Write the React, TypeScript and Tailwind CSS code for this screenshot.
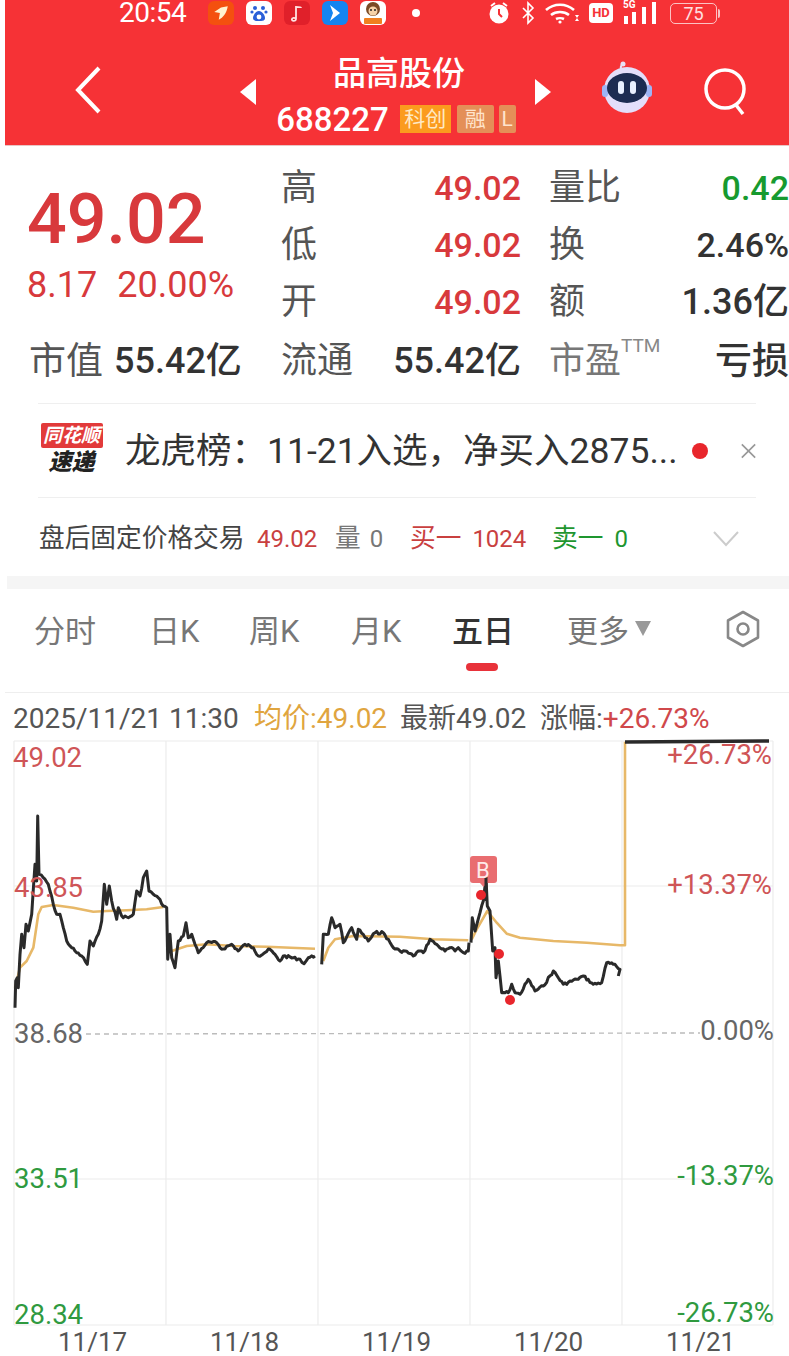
import React from "react";

const FONT = "font-['Roboto','Noto_Sans_CJK_SC',sans-serif]";

const z3 = (pts: number[][]) => pts.map(([x, y]) => [x / 3, 780 + y / 3]);
const z4 = (pts: number[][]) => pts.map(([x, y]) => [400 + x / 3, 720 + y / 3]);

function jag(pts: number[][], amp = 1.4) {
  const out: string[] = [];
  let seed = 7;
  const rnd = () => {
    seed = (seed * 9301 + 49297) % 233280;
    return seed / 233280 - 0.5;
  };
  pts.forEach(([x, y], i) => {
    if (i === 0) {
      out.push(`${x.toFixed(1)},${y.toFixed(1)}`);
      return;
    }
    const [px, py] = pts[i - 1];
    const n = Math.max(1, Math.floor(Math.abs(x - px) / 1.6));
    for (let k = 1; k <= n; k++) {
      const t = k / n;
      const j = k === n ? 0 : rnd() * amp * 2;
      out.push(`${(px + (x - px) * t).toFixed(1)},${(py + (y - py) * t + j).toFixed(1)}`);
    }
  });
  return out.join(" ");
}
const smooth = (pts: number[][]) => pts.map(([x, y]) => `${x.toFixed(1)},${y.toFixed(1)}`).join(" ");

const black1 = jag(z3([[45,680],[47,600],[52,590],[55,620],[60,520],[65,460],[72,500],[78,430],[85,450],[95,400],[105,250],[110,300],[113,105],[117,280],[130,290],[145,310],[160,370],[170,400],[180,400],[190,440],[200,480],[215,500],[230,515],[245,525],[262,550],[270,480],[280,495],[295,460],[305,420],[313,310],[320,370],[328,315],[335,360],[350,415],[355,380],[365,405],[385,410],[400,400],[410,330],[420,345],[430,290],[440,270],[447,330],[460,340],[475,350],[490,375],[500,380],[503,535],[510,460],[515,530],[525,560],[535,480],[550,465],[558,425],[565,470],[575,460],[585,490],[595,515],[620,485],[650,485],[665,505],[695,490],[715,510],[735,490],[760,500],[775,525],[810,505],[840,540],[850,525],[900,535],[912,548],[925,530],[945,525]]));
const black2 = jag([...z3([[965,550],[970,460],[985,460],[995,410],[1005,440],[1020,430],[1030,485],[1055,440],[1070,475],[1075,445],[1105,480],[1125,455],[1150,455],[1180,500],[1200,510]]), ...z4([[15,690],[40,705],[55,690],[70,695],[90,655],[115,675],[135,690],[150,680],[165,690],[175,680],[190,695],[205,690],[207,665]])]);
const black3 = jag(z4([[213,665],[217,590],[225,630],[240,575],[250,540],[258,470],[262,555],[270,570],[278,690],[285,680],[288,770],[295,720],[305,815],[325,815],[335,790],[345,815],[360,820],[385,775],[405,810],[430,795],[460,750],[490,790],[530,775],[550,765],[580,790],[605,785],[620,725],[640,730],[660,745],[655,765]]));
const avg1 = smooth(z3([[45,620],[60,560],[80,540],[100,500],[115,400],[125,378],[160,372],[220,380],[280,392],[320,390],[380,388],[440,385],[490,378]]));
const avg2 = smooth(z3([[515,510],[560,495],[620,490],[700,495],[800,497],[945,503]]));
const avg3 = smooth([...z3([[970,540],[985,500],[1005,475],[1060,465],[1200,467]]), ...z4([[100,655],[205,658]])]);
const avg4 = smooth(z4([[215,655],[230,625],[262,570],[290,605],[320,638],[360,650],[460,660],[560,665],[660,673],[675,673],[675,62]]));

function AppIcon({ className, children }: { className: string; children?: React.ReactNode }) {
  return <div className={`w-[26px] h-[24px] rounded-[6px] flex items-center justify-center overflow-hidden shrink-0 ${className}`}>{children}</div>;
}

function StatusBar() {
  return (
    <div className="h-[26px] flex items-center text-white">
      <span className="ml-[114px] w-[89px] shrink-0 text-[28px] leading-[26px] tracking-[-0.5px]">20:54</span>
      <div className="flex gap-[12px] items-center">
        <AppIcon className="bg-[#f4500f]">
          <svg width="18" height="18" viewBox="0 0 16 16"><path d="M14 2 L8 3 L2 7 L7 8 L6 14 C10 12 13 8 14 2Z" fill="#fff3d0" /></svg>
        </AppIcon>
        <AppIcon className="bg-white">
          <svg width="20" height="20" viewBox="0 0 20 20" fill="#2a5fd8"><circle cx="6" cy="5" r="2" /><circle cx="14" cy="5" r="2" /><circle cx="3" cy="9" r="1.6" /><circle cx="17" cy="9" r="1.6" /><path d="M10 8c3 0 6 4 6 7 0 3-3 3-6 3s-6 0-6-3c0-3 3-7 6-7z" /><circle cx="10" cy="14" r="2.4" fill="#fff" /></svg>
        </AppIcon>
        <AppIcon className="bg-[#e0202a]">
          <svg width="14" height="18" viewBox="0 0 14 18"><path d="M6 15V3c2 0 5 0 5 1M6 15c0 3-5 2-4 0 0-1 3-2 4 0" fill="none" stroke="#ffe2e2" strokeWidth="1.8" /></svg>
        </AppIcon>
        <AppIcon className="bg-[#1584f0]">
          <svg width="16" height="18" viewBox="0 0 16 18"><path d="M3 1 L13 9 L3 17 L6 9Z" fill="#fff" /></svg>
        </AppIcon>
        <AppIcon className="bg-white">
          <svg width="24" height="24" viewBox="0 0 24 24"><circle cx="12" cy="8" r="7" fill="#7a4a25" /><circle cx="12" cy="10" r="4.500" fill="#f6d3a8" /><circle cx="10" cy="9" r="1" fill="#222" /><circle cx="14" cy="9" r="1" fill="#222" /><rect x="3" y="17" width="18" height="6" rx="1" fill="#f08020" /></svg>
        </AppIcon>
      </div>
      <div className="ml-[26px] w-[8px] h-[8px] rounded-full bg-white shrink-0" />
      <div className="ml-[66px] flex items-center shrink-0">
        <svg width="26" height="24" viewBox="0 0 26 24" fill="none"><circle cx="13" cy="13" r="9.500" fill="#fff" /><path d="M13 8v5l3 3" stroke="#f63236" strokeWidth="2" /><path d="M5 5l4-3M21 5l-4-3" stroke="#fff" strokeWidth="2" /></svg>
        <svg className="ml-[8px]" width="16" height="24" viewBox="0 0 16 24" fill="none" stroke="#fff" strokeWidth="1.600"><path d="M3 7l10 10-5 5V2l5 5L3 17" /></svg>
        <svg className="ml-[8px]" width="36" height="24" viewBox="0 0 36 24" fill="none" stroke="#fff" strokeWidth="2.600"><path d="M2 9c8-7 20-7 28 0M7 14c5-4 13-4 18 0M12 18c2-1 6-1 8 0" /><circle cx="16" cy="21" r="1.600" fill="#fff" stroke="none" /><path d="M31 14l2 3 2-3zM31 20l2-3 2 3z" fill="#fff" stroke="none" /></svg>
        <div className="ml-[9px] w-[24px] h-[20px] rounded-[4px] bg-white text-[#f63236] text-[13px] leading-[20px] font-bold text-center">HD</div>
        <div className="relative ml-[10px] w-[36px] h-[24px]">
          <span className="absolute left-0 -top-[1px] text-[10px] leading-none font-bold">5G</span>
          <svg width="36" height="24" viewBox="0 0 36 24" fill="#fff"><rect x="1" y="15" width="4" height="8" /><rect x="9" y="11" width="4" height="12" /><rect x="19" y="6" width="4" height="17" /><rect x="29" y="1" width="4" height="22" /></svg>
        </div>
        <div className="ml-[11px] w-[47px] h-[21px] rounded-[5px] border border-white/70 text-white/85 text-[18px] leading-[19px] text-center">75</div>
        <div className="ml-[1px] w-[2px] h-[9px] bg-white/70 rounded-r-[2px]" />
      </div>
    </div>
  );
}

function Header() {
  return (
    <div className="h-[146px] bg-[#f63236] text-white border-b border-[#e9c5c5]">
      <StatusBar />
      <div className="flex items-start h-[119px] pt-[28px]">
        <svg className="ml-[68px] mt-[11px]" width="30" height="50" viewBox="0 0 30 50" fill="none" stroke="#fff" strokeWidth="4"><path d="M26 3L5 25l21 22" /></svg>
        <svg className="ml-[136px] mt-[24px]" width="18" height="28" viewBox="0 0 18 28"><path d="M17 1v26L1 14z" fill="#fff" /></svg>
        <div className="w-[284px] flex flex-col items-center shrink-0">
          <span className="text-[33px] leading-[40px] font-medium">品高股份</span>
          <div className="flex items-center h-[42px] mt-[4px] -ml-[6px]">
            <span className="text-[33px] leading-none mr-[11px] font-medium">688227</span>
            <span className="bg-[#fb9b1e] text-[#ffe9c4] text-[21px] leading-[28px] h-[28px] w-[51px] text-center">科创</span>
            <span className="ml-[6px] bg-[#e48f58] text-[#ffe4cc] text-[21px] leading-[28px] h-[28px] w-[37px] text-center rounded-[2px]">融</span>
            <span className="ml-[5px] bg-[#e48f58] text-[#ffe4cc] text-[21px] leading-[28px] h-[28px] w-[17px] text-center rounded-[2px]">L</span>
          </div>
        </div>
        <svg className="-ml-[7px] mt-[24px]" width="18" height="28" viewBox="0 0 18 28"><path d="M1 1v26l16-13z" fill="#fff" /></svg>
        <svg className="ml-[48px] mt-[7px]" width="54" height="52" viewBox="0 0 54 52">
          <path d="M22 10c-2-3-1-6 1-8" fill="none" stroke="#e8dff5" strokeWidth="2" />
          <circle cx="23" cy="3" r="2.500" fill="#e8dff5" />
          <circle cx="27" cy="29" r="23" fill="#e3defa" />
          <rect x="2" y="24" width="6" height="12" rx="3" fill="#9db4f5" />
          <rect x="46" y="24" width="6" height="12" rx="3" fill="#9db4f5" />
          <ellipse cx="27" cy="27" rx="20" ry="15" fill="#1c2c52" />
          <rect x="18" y="20" width="6" height="13" rx="3" fill="#e8f0ff" />
          <rect x="30" y="20" width="6" height="13" rx="3" fill="#e8f0ff" />
        </svg>
        <svg className="ml-[49px] mt-[14px]" width="46" height="48" viewBox="0 0 46 48" fill="none" stroke="#fff" strokeWidth="3.500"><circle cx="22" cy="21" r="19" /><path d="M33 37l7 9" /></svg>
      </div>
    </div>
  );
}

function Stat({ label, value, color, big }: { label: string; value: string; color: string; big?: boolean }) {
  return (
    <div className="flex items-center justify-between whitespace-nowrap">
      <span className="text-[36px] text-[#555]">{label}</span>
      <span className={`${big ? "text-[36px]" : "text-[34px]"} font-medium ${color}`}>{value}</span>
    </div>
  );
}

function Stats() {
  return (
    <div className="grid grid-cols-[248px_240px_240px] gap-x-[28px] grid-rows-[57px_57px_57px_59px] h-[257px] pt-[13px] leading-none overflow-hidden">
      <div className="row-span-3 pl-[22px] pt-[25px]">
        <div className="text-[70px] leading-[70px] font-medium text-[#d8393c]">49.02</div>
        <div className="flex gap-[20px] text-[36px] leading-[62px] text-[#d8393c] whitespace-nowrap"><span>8.17</span><span>20.00%</span></div>
      </div>
      <Stat label="高" value="49.02" color="text-[#d8393c]" />
      <Stat label="量比" value="0.42" color="text-[#179a2f]" />
      <Stat label="低" value="49.02" color="text-[#d8393c]" />
      <Stat label="换" value="2.46%" color="text-[#333]" />
      <Stat label="开" value="49.02" color="text-[#d8393c]" />
      <Stat label="额" value="1.36亿" color="text-[#333]" big />
      <div className="pl-[24px] pt-[3px] flex items-center gap-[11px] whitespace-nowrap">
        <span className="text-[37px] text-[#555]">市值</span>
        <span className="text-[36px] font-medium text-[#333]">55.42亿</span>
      </div>
      <div className="pt-[3px] flex items-center justify-between whitespace-nowrap">
        <span className="text-[36px] text-[#555]">流通</span>
        <span className="text-[36px] font-medium text-[#333]">55.42亿</span>
      </div>
      <div className="pt-[3px] flex items-center justify-between whitespace-nowrap w-[240px]">
        <span className="text-[36px] text-[#777]">市盈<sup className="text-[19px] align-[12px] leading-none text-[#888]">TTM</sup></span>
        <span className="text-[37px] font-medium text-[#333]">亏损</span>
      </div>
    </div>
  );
}

function NewsRow() {
  return (
    <div className="mx-[33px] w-[718px] h-[95px] border-y border-[#efefef] flex items-center">
      <div className="w-[63px] flex flex-col items-center ml-[2px] shrink-0">
        <div className="w-[62px] h-[25px] bg-[#e23a3a] rounded-[2px] text-white text-[19px] leading-[25px] text-center italic font-bold">同花顺</div>
        <div className="text-[#222] text-[23px] leading-[30px] italic font-black">速递</div>
      </div>
      <span className="ml-[22px] pt-[3px] w-[565px] shrink-0 text-[35.500px] text-[#333] whitespace-nowrap leading-none">龙虎榜：11-21入选，净买入2875...</span>
      <div className="ml-[2px] w-[16px] h-[16px] rounded-full bg-[#e8262c] shrink-0" />
      <svg className="ml-[33px]" width="18" height="18" viewBox="0 0 18 18" fill="none" stroke="#999" strokeWidth="2"><path d="M1 1l16 16M17 1L1 17" /></svg>
    </div>
  );
}

function AfterHours() {
  return (
    <div className="h-[78px] pl-[34px] pt-[4px] flex items-center text-[25.700px] whitespace-nowrap leading-none">
      <span className="text-[#444] w-[218px] shrink-0">盘后固定价格交易</span>
      <span className="text-[#c9403f] w-[78px] shrink-0 text-[24px]">49.02</span>
      <span className="text-[#777] w-[75px] shrink-0">量<span className="ml-[9px] text-[24px]">0</span></span>
      <span className="text-[#c9403f] w-[142px] shrink-0">买一<span className="ml-[11px] text-[24px]">1024</span></span>
      <span className="text-[#1e962f] w-[161px] shrink-0">卖一<span className="ml-[11px] text-[24px]">0</span></span>
      <svg width="26" height="16" viewBox="0 0 26 16" fill="none" stroke="#ccc" strokeWidth="2"><path d="M1 1l12 13L25 1" /></svg>
    </div>
  );
}

function Tabs() {
  const cls = "text-[31px] leading-none text-[#777] whitespace-nowrap shrink-0";
  return (
    <div className="h-[104px] border-b border-[#eeeeee] flex items-start pt-[27px] pl-[29px] relative">
      <span className={`${cls} w-[115px]`}>分时</span>
      <span className={`${cls} w-[100px]`}>日K</span>
      <span className={`${cls} w-[102px]`}>周K</span>
      <span className={`${cls} w-[101px]`}>月K</span>
      <span className="w-[115px] shrink-0 text-[31px] leading-none font-medium text-[#333]">五日</span>
      <span className={`${cls} flex items-center w-[158px]`}>更多<svg className="ml-[6px] -mt-[6px]" width="16" height="15" viewBox="0 0 16 15"><path d="M0 0h16l-8 15z" fill="#999" /></svg></span>
      <svg className="-mt-[6px]" width="36" height="38" viewBox="0 0 36 38" fill="none" stroke="#888" strokeWidth="2.600"><path d="M18 2l15 8.500v17L18 36 3 27.500v-17z" strokeLinejoin="round" /><circle cx="18" cy="19" r="5.500" /></svg>
      <div className="absolute left-[461px] top-[74px] w-[32px] h-[8px] rounded-full bg-[#e8323a]" />
    </div>
  );
}

function ChartHeader() {
  return (
    <div className="h-[48px] pl-[8px] flex items-end pb-[8px] text-[28px] leading-none whitespace-nowrap">
      <span className="text-[#555] w-[241px] shrink-0">2025/11/21 11:30</span>
      <span className="text-[#e0a53f] w-[146px] shrink-0">均价:49.02</span>
      <span className="text-[#555] w-[140px] shrink-0">最新49.02</span>
      <span className="text-[#555]">涨幅:</span>
      <span className="text-[#d0484b]">+26.73%</span>
    </div>
  );
}

function Label({ t, c, cls }: { t: string; c: string; cls: string }) {
  return <span className={`absolute text-[27.500px] leading-none ${c} ${cls}`}>{t}</span>;
}

function Chart() {
  return (
    <div className="relative h-[584px] -ml-[5px] w-[789px]">
      <svg className="absolute left-0 top-[-740px]" width="789" height="1356" viewBox="0 0 789 1356" fill="none">
        {[14, 166, 318, 470, 622, 773].map((x) => <line key={x} x1={x} x2={x} y1="740" y2="1324" stroke="#ececec" strokeWidth="1.200" />)}
        {[740, 885, 1178, 1324].map((y) => <line key={y} x1="14" x2="773" y1={y} y2={y} stroke="#ececec" strokeWidth="1.200" />)}
        <line x1="86" x2="700" y1="1033" y2="1032" stroke="#bbb" strokeWidth="1.400" strokeDasharray="5 4" />
        {[avg1, avg2, avg3, avg4].map((p, i) => <polyline key={i} points={p} stroke="#e7b868" strokeWidth="2.600" strokeLinejoin="round" />)}
        {[black1, black2, black3].map((p, i) => <polyline key={i} points={p} stroke="#2a2a2a" strokeWidth="3" strokeLinejoin="round" />)}
        <line x1="625" x2="769" y1="741" y2="740" stroke="#2a2a2a" strokeWidth="3.400" />
        <rect x="470" y="855" width="27" height="27" rx="3" fill="#e96d70" />
        <path d="M480 882h7l-3.500 4z" fill="#e96d70" />
        <line x1="486" x2="486" y1="876" y2="900" stroke="#2a2a2a" strokeWidth="3" />
        <circle cx="481" cy="894" r="5" fill="#e8262c" />
        <circle cx="499" cy="953" r="5" fill="#e8262c" />
        <circle cx="510" cy="999" r="5" fill="#e8262c" />
      </svg>
      <span className="absolute left-[476px] top-[116px] text-[22px] leading-[27px] text-[#ffe9e9]">B</span>
      <Label t="49.02" c="text-[#cf5557]" cls="left-[13px] top-[3px]" />
      <Label t="+26.73%" c="text-[#cf5557]" cls="right-[17px] top-[0px]" />
      <Label t="43.85" c="text-[#cf5557]" cls="left-[14px] top-[133px]" />
      <Label t="+13.37%" c="text-[#cf5557]" cls="right-[17px] top-[130px]" />
      <Label t="38.68" c="text-[#666]" cls="left-[14px] top-[279px]" />
      <Label t="0.00%" c="text-[#666]" cls="right-[15px] top-[276px]" />
      <Label t="33.51" c="text-[#2f9a3f]" cls="left-[14px] top-[424px]" />
      <Label t="-13.37%" c="text-[#2f9a3f]" cls="right-[15px] top-[421px]" />
      <Label t="28.34" c="text-[#2f9a3f]" cls="left-[14px] top-[560px]" />
      <Label t="-26.73%" c="text-[#2f9a3f]" cls="right-[15px] top-[558px]" />
    </div>
  );
}

function Dates() {
  return (
    <div className="h-[32px] -ml-[5px] pl-[58px] pt-[2px] flex items-center text-[26px] leading-none text-[#555]">
      {["11/17", "11/18", "11/19", "11/20", "11/21"].map((d) => <span key={d} className="w-[152px] shrink-0">{d}</span>)}
    </div>
  );
}

export default function App() {
  return (
    <div className={`w-[789px] h-[1356px] bg-white overflow-hidden pl-[5px] ${FONT}`}>
      <Header />
      <Stats />
      <NewsRow />
      <AfterHours />
      <div className="h-[13px] bg-[#f5f5f5] ml-[2px]" />
      <Tabs />
      <ChartHeader />
      <Chart />
      <Dates />
    </div>
  );
}
